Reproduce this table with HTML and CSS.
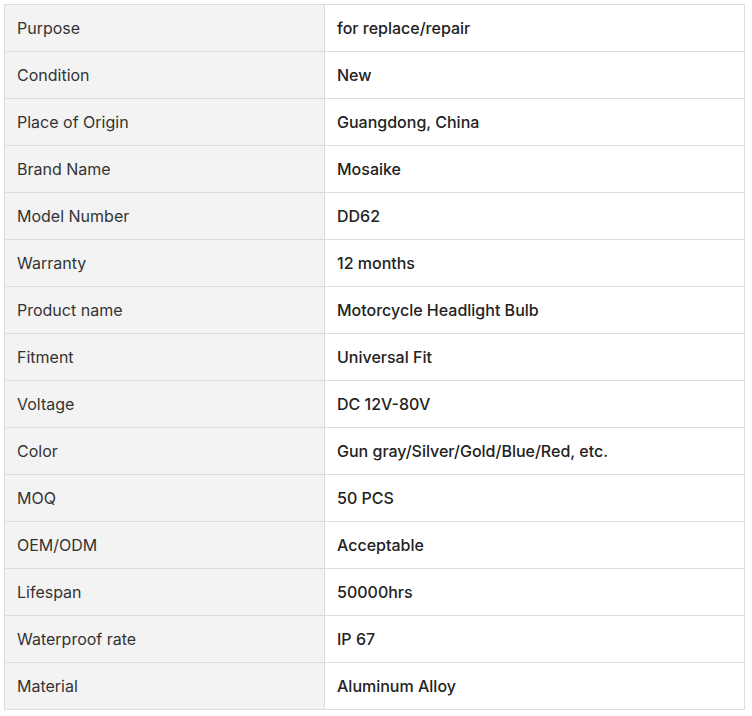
FILE: index.html
```html
<!DOCTYPE html>
<html>
<head>
<meta charset="utf-8">
<link rel="stylesheet" href="styles.css">
</head>
<body>
<table class="specs">
<tbody>
<tr><td class="k">Purpose</td><td class="v">for replace/repair</td></tr>
<tr><td class="k">Condition</td><td class="v">New</td></tr>
<tr><td class="k">Place of Origin</td><td class="v">Guangdong, China</td></tr>
<tr><td class="k">Brand Name</td><td class="v">Mosaike</td></tr>
<tr><td class="k">Model Number</td><td class="v">DD62</td></tr>
<tr><td class="k">Warranty</td><td class="v">12 months</td></tr>
<tr><td class="k">Product name</td><td class="v">Motorcycle Headlight Bulb</td></tr>
<tr><td class="k">Fitment</td><td class="v">Universal Fit</td></tr>
<tr><td class="k">Voltage</td><td class="v">DC 12V-80V</td></tr>
<tr><td class="k">Color</td><td class="v">Gun gray/Silver/Gold/Blue/Red, etc.</td></tr>
<tr><td class="k">MOQ</td><td class="v">50 PCS</td></tr>
<tr><td class="k">OEM/ODM</td><td class="v">Acceptable</td></tr>
<tr><td class="k">Lifespan</td><td class="v">50000hrs</td></tr>
<tr><td class="k">Waterproof rate</td><td class="v">IP 67</td></tr>
<tr><td class="k">Material</td><td class="v">Aluminum Alloy</td></tr>
</tbody>
</table>
</body>
</html>
```
FILE: styles.css
```css
html, body { margin: 0; padding: 0; background: #fff; }
body { padding: 4px; font-family: Inter, "Noto Sans", sans-serif; font-size: 16px; color: #333; }
.specs { border-collapse: collapse; width: 741px; table-layout: fixed; }
.specs td { border: 1px solid #dcdcdc; height: 46px; padding: 0 12px; box-sizing: border-box; line-height: 22px; vertical-align: middle; }
.specs .k { width: 320px; background: #f3f3f3; font-weight: 400; color: #333; }
.specs .v { background: #fff; font-weight: 500; color: #222; }
.specs tr { height: 47px; }
```
